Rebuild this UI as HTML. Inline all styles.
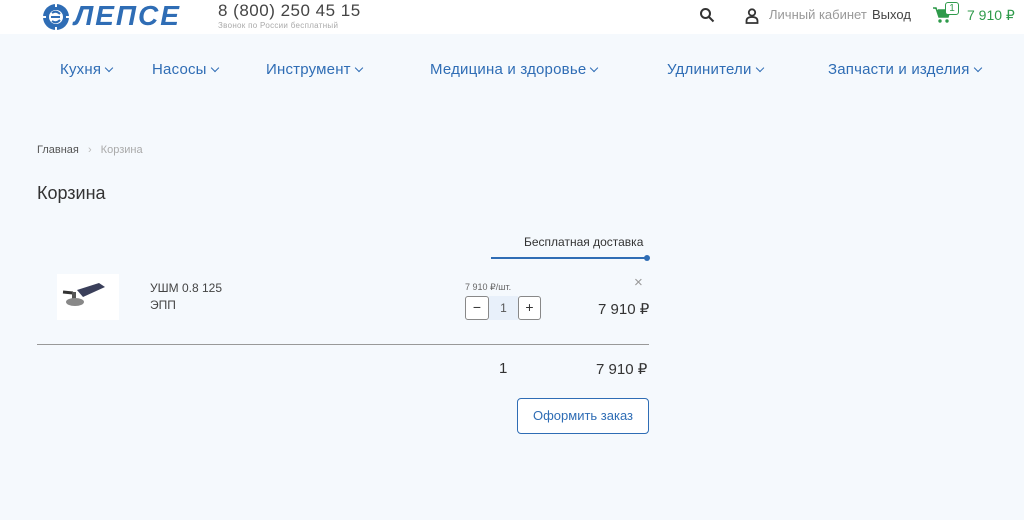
<!DOCTYPE html>
<html><head><meta charset="utf-8"><style>
*{margin:0;padding:0;box-sizing:border-box}
body{width:1024px;height:520px;background:#f5f9fd;font-family:"Liberation Sans",sans-serif;position:relative;overflow:hidden;color:#333}
.a{position:absolute;white-space:nowrap}
.hdr{position:absolute;left:0;top:0;width:1024px;height:34px;background:#fff}
.nav{font-size:15px;color:#2f6db5;top:61px;letter-spacing:0.2px}
.nav:after{content:"";display:inline-block;width:5px;height:5px;border-right:1.5px solid #2f6db5;border-bottom:1.5px solid #2f6db5;transform:rotate(45deg);margin-left:5px;position:relative;top:-3px}
</style></head><body>
<div class="hdr"></div>
<svg class="a" style="left:42px;top:3px" width="28" height="28" viewBox="0 0 28 28"><g fill="#2f6db5"><circle cx="14" cy="14" r="13"/></g><circle cx="14" cy="14" r="7" fill="#fff"/><path d="M9 14h9M10 10q4-3 8 1M10 18q4 3 8-1" stroke="#2f6db5" stroke-width="2" fill="none"/><path d="M0 14h4M24 14h4M14 0v4M14 24v4" stroke="#fff" stroke-width="2"/></svg>
<div class="a" style="left:74px;top:0px;font-size:28px;font-weight:bold;font-style:italic;color:#2f6db5;letter-spacing:2px">ЛЕПСЕ</div>
<div class="a" style="left:218px;top:1px;font-size:17px;color:#444;letter-spacing:0.5px">8 (800) 250 45 15</div>
<div class="a" style="left:218px;top:21px;font-size:8px;color:#aaa;letter-spacing:0.3px">Звонок по России бесплатный</div>
<svg class="a" style="left:699px;top:7px" width="16" height="16" viewBox="0 0 16 16"><circle cx="6.5" cy="6.5" r="4.5" stroke="#333" stroke-width="2" fill="none"/><path d="M10 10l4.5 4.5" stroke="#333" stroke-width="2"/></svg>
<svg class="a" style="left:745px;top:8px" width="14" height="16" viewBox="0 0 14 16"><circle cx="7" cy="4.5" r="3.2" stroke="#333" stroke-width="1.8" fill="none"/><path d="M1.5 15v-2q0-4 5.5-4t5.5 4v2z" stroke="#333" stroke-width="1.8" fill="none"/></svg>
<div class="a" style="left:769px;top:7px;font-size:13px;color:#999">Личный кабинет</div>
<div class="a" style="left:872px;top:7px;font-size:13px;color:#444">Выход</div>
<svg class="a" style="left:933px;top:7px" width="18" height="17" viewBox="0 0 18 17"><path d="M0 1h3l3 9h9l2-7H5" fill="#2e9a4a" stroke="#2e9a4a" stroke-width="1.5"/><circle cx="7" cy="14" r="1.7" fill="#2e9a4a"/><circle cx="14" cy="14" r="1.7" fill="#2e9a4a"/></svg>
<div class="a" style="left:945px;top:2px;width:14px;height:13px;border:1px solid #2e9a4a;border-radius:3px;background:#fff;font-size:10px;color:#2e9a4a;text-align:center;line-height:11px">1</div>
<div class="a" style="left:967px;top:7px;font-size:14px;color:#2e9a4a">7 910 ₽</div>
<div class="a nav" style="left:60px">Кухня</div>
<div class="a nav" style="left:152px">Насосы</div>
<div class="a nav" style="left:266px">Инструмент</div>
<div class="a nav" style="left:430px">Медицина и здоровье</div>
<div class="a nav" style="left:667px">Удлинители</div>
<div class="a nav" style="left:828px">Запчасти и изделия</div>
<div class="a" style="left:37px;top:144px;font-size:11px;color:#555">Главная <span style="color:#bbb;margin:0 6px">›</span> <span style="color:#aaa">Корзина</span></div>
<div class="a" style="left:37px;top:183px;font-size:18px;color:#333">Корзина</div>
<div class="a" style="left:524px;top:235px;font-size:12px;color:#333">Бесплатная доставка</div>
<div class="a" style="left:491px;top:257px;width:157px;height:2px;background:#2f6db5"></div>
<div class="a" style="left:644px;top:255px;width:6px;height:6px;border-radius:3px;background:#2f6db5"></div>
<div class="a" style="left:57px;top:274px;width:62px;height:46px;background:#fff"></div>
<svg class="a" style="left:60px;top:280px" width="50" height="34" viewBox="0 0 50 34"><path d="M3 12l10 1" stroke="#333" stroke-width="3"/><path d="M14 12v8" stroke="#555" stroke-width="4"/><ellipse cx="15" cy="22" rx="9" ry="4" fill="#888"/><path d="M17 10l22-7 6 4-22 10z" fill="#3a3f5a"/></svg>
<div class="a" style="left:150px;top:281px;font-size:12px;color:#444">УШМ 0.8 125</div>
<div class="a" style="left:150px;top:298px;font-size:12px;color:#444">ЭПП</div>
<div class="a" style="left:465px;top:282px;font-size:9px;color:#666">7 910 ₽/шт.</div>
<div class="a" style="left:465px;top:296px;width:24px;height:24px;border:1px solid #888;border-radius:3px;background:#fff;text-align:center;font-size:14px;line-height:21px">−</div>
<div class="a" style="left:489px;top:296px;width:29px;height:24px;background:#e8f0fa;text-align:center;font-size:12px;line-height:24px;color:#555">1</div>
<div class="a" style="left:518px;top:296px;width:23px;height:24px;border:1px solid #888;border-radius:3px;background:#fff;text-align:center;font-size:14px;line-height:21px">+</div>
<div class="a" style="left:634px;top:274px;font-size:15px;color:#999">×</div>
<div class="a" style="left:598px;top:300px;font-size:15px;color:#333">7 910 ₽</div>
<div class="a" style="left:37px;top:344px;width:612px;height:1px;background:#999"></div>
<div class="a" style="left:499px;top:360px;font-size:15px;color:#333">1</div>
<div class="a" style="left:596px;top:360px;font-size:15px;color:#333">7 910 ₽</div>
<div class="a" style="left:517px;top:398px;width:132px;height:36px;border:1px solid #2f6db5;border-radius:4px;background:#fff;font-size:13px;color:#2f6db5;text-align:center;line-height:34px">Оформить заказ</div>
</body></html>
